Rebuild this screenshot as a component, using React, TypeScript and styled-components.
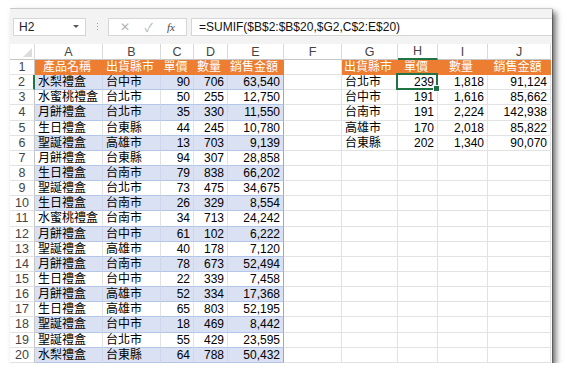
import { Fragment } from 'react';
import styled, { createGlobalStyle } from 'styled-components';

const GlobalStyle = createGlobalStyle`
  html, body { margin: 0; padding: 0; background: #fff; }
  body { font-family: "Liberation Sans", "Noto Sans CJK TC", sans-serif; }
`;

const COLS = [25, 68, 58, 33, 34, 56, 58, 56, 40, 50, 63];
const LETTERS = ['A', 'B', 'C', 'D', 'E', 'F', 'G', 'H', 'I', 'J'];

const sales: string[][] = [
  ['水梨禮盒', '台中市', '90', '706', '63,540'],
  ['水蜜桃禮盒', '台北市', '50', '255', '12,750'],
  ['月餅禮盒', '台北市', '35', '330', '11,550'],
  ['生日禮盒', '台東縣', '44', '245', '10,780'],
  ['聖誕禮盒', '高雄市', '13', '703', '9,139'],
  ['月餅禮盒', '台東縣', '94', '307', '28,858'],
  ['生日禮盒', '台南市', '79', '838', '66,202'],
  ['聖誕禮盒', '台北市', '73', '475', '34,675'],
  ['生日禮盒', '台南市', '26', '329', '8,554'],
  ['水蜜桃禮盒', '台南市', '34', '713', '24,242'],
  ['月餅禮盒', '台中市', '61', '102', '6,222'],
  ['聖誕禮盒', '高雄市', '40', '178', '7,120'],
  ['月餅禮盒', '台南市', '78', '673', '52,494'],
  ['生日禮盒', '台中市', '22', '339', '7,458'],
  ['月餅禮盒', '高雄市', '52', '334', '17,368'],
  ['生日禮盒', '高雄市', '65', '803', '52,195'],
  ['聖誕禮盒', '台中市', '18', '469', '8,442'],
  ['聖誕禮盒', '台北市', '55', '429', '23,595'],
  ['水梨禮盒', '台東縣', '64', '788', '50,432'],
];

const summary: string[][] = [
  ['台北市', '239', '1,818', '91,124'],
  ['台中市', '191', '1,616', '85,662'],
  ['台南市', '191', '2,224', '142,938'],
  ['高雄市', '170', '2,018', '85,822'],
  ['台東縣', '202', '1,340', '90,070'],
];

const salesHead = ['產品名稱', '出貨縣市', '單價', '數量', '銷售金額'];
const summaryHead = ['出貨縣市', '單價', '數量', '銷售金額'];

type Kind = 'head' | 'band' | 'light' | 'plain';
type Align = 'left' | 'right' | 'center';

const Window = styled.div`
  margin: 8px 0 0 10px;
  width: 542px;
  background: #fff;
  border-top: 1px solid #c8c8c8;
  box-shadow: 4px 4px 6px rgba(0, 0, 0, 0.55), 1px 1px 1px rgba(0, 0, 0, 0.3);
`;

const FormulaBar = styled.div`
  display: flex;
  align-items: center;
  height: 35px;
  padding-left: 3px;
  background: #f3f3f3;
`;

const Box = styled.div`
  box-sizing: border-box;
  height: 18px;
  background: #fff;
  border: 1px solid #d6d6d6;
  display: flex;
  align-items: center;
  font-size: 12px;
  color: #222;
`;

const NameBox = styled(Box)`
  width: 73px;
  padding-left: 5px;
  justify-content: space-between;
`;

const Caret = styled.span`
  width: 0;
  height: 0;
  border-left: 3px solid transparent;
  border-right: 3px solid transparent;
  border-top: 3px solid #555;
  margin-right: 6px;
`;

const Grip = styled.div`
  width: 22px;
  display: flex;
  flex-direction: column;
  align-items: center;
  gap: 2px;
  & > i {
    width: 1px;
    height: 1px;
    background: #999;
  }
`;

const Icons = styled(Box)`
  width: 79px;
  justify-content: space-around;
  padding: 0 4px;
  color: #b4b4b4;
  margin-right: 4px;
`;

const Fx = styled.span`
  font-family: "Liberation Serif", serif;
  font-style: italic;
  font-size: 11px;
  color: #444;
`;

const FormulaInput = styled(Box)`
  flex: 1;
  padding-left: 7px;
  color: #111;
  border-right: none;
`;

const Sheet = styled.div`
  display: grid;
  grid-template-columns: ${COLS.map((c) => `${c}px`).join(' ')};
  grid-template-rows: 16px repeat(20, 15.15px);
  font-size: 12px;
  color: #000;
`;

const Corner = styled.div`
  background: #fff;
  border-right: 1px solid #dadada;
  border-bottom: 1px solid #c6c6c6;
  position: relative;
  overflow: hidden;
  &::after {
    content: '';
    position: absolute;
    right: 2px;
    bottom: 2px;
    border-left: 9px solid transparent;
    border-bottom: 9px solid #dcdcdc;
  }
`;

const ColHead = styled.div<{ $sel?: boolean }>`
  box-sizing: border-box;
  background: #fff;
  color: #444;
  font-size: 12.5px;
  display: flex;
  align-items: center;
  justify-content: center;
  border-right: 1px solid #dadada;
  border-bottom: ${(p) => (p.$sel ? '2px solid #217346' : '1px solid #c6c6c6')};
`;

const RowHead = styled.div<{ $sel?: boolean }>`
  box-sizing: border-box;
  background: #fff;
  color: #444;
  font-size: 12.5px;
  display: flex;
  align-items: center;
  justify-content: center;
  border-bottom: 1px solid #e2e2e2;
  border-right: ${(p) => (p.$sel ? '2px solid #217346' : '1px solid #c6c6c6')};
`;

const fills: Record<Kind, string> = {
  head: '#ed7d31',
  band: '#d9e1f2',
  light: '#fff',
  plain: '#fff',
};

const Cell = styled.div<{ $kind: Kind; $align: Align; $edge?: boolean }>`
  position: relative;
  box-sizing: border-box;
  background: ${(p) => fills[p.$kind]};
  color: ${(p) => (p.$kind === 'head' ? '#fff' : '#000')};
  display: flex;
  align-items: center;
  justify-content: ${(p) =>
    p.$align === 'left' ? 'flex-start' : p.$align === 'right' ? 'flex-end' : 'center'};
  padding: ${(p) => (p.$align === 'left' ? '0 0 0 3px' : '0 3px 0 0')};
  white-space: nowrap;
  line-height: 1;
  border-bottom: 1px solid
    ${(p) => (p.$kind === 'head' ? '#ed7d31' : p.$kind === 'plain' ? '#e2e2e2' : '#b4c6e7')};
  border-right: 1px solid
    ${(p) =>
      p.$edge
        ? '#8ea9db'
        : p.$kind === 'head'
        ? '#ed7d31'
        : p.$kind === 'band'
        ? '#cdd6ea'
        : '#e2e2e2'};
`;

const Selection = styled.div`
  position: absolute;
  inset: -2px -1px -1px -2px;
  border: 2px solid #217346;
  z-index: 2;
  pointer-events: none;
`;

const Handle = styled.div`
  position: absolute;
  right: -4px;
  bottom: -4px;
  width: 5px;
  height: 5px;
  background: #217346;
  border: 1px solid #fff;
`;

function cellFor(row: number, col: number): { kind: Kind; align: Align; text: string; edge?: boolean } {
  const align: Align = col === 0 || col === 1 || col === 6 ? 'left' : 'right';
  if (row === 1) {
    if (col <= 4) return { kind: 'head', align: 'center', text: salesHead[col] };
    if (col >= 6) return { kind: 'head', align: 'center', text: summaryHead[col - 6] };
    return { kind: 'plain', align, text: '' };
  }
  if (col <= 4) {
    return { kind: row % 2 === 0 ? 'band' : 'light', align, text: sales[row - 2][col], edge: col === 4 };
  }
  if (col >= 6 && row <= 6) {
    return { kind: 'plain', align, text: summary[row - 2][col - 6] };
  }
  return { kind: 'plain', align, text: '' };
}

export default function App() {
  const rows = Array.from({ length: 20 }, (_, i) => i + 1);
  return (
    <>
      <GlobalStyle />
      <Window>
        <FormulaBar>
          <NameBox>
            H2
            <Caret />
          </NameBox>
          <Grip>
            <i />
            <i />
            <i />
          </Grip>
          <Icons>
            <span>✕</span>
            <span>✓</span>
            <Fx>fx</Fx>
          </Icons>
          <FormulaInput>=SUMIF($B$2:$B$20,$G2,C$2:E$20)</FormulaInput>
        </FormulaBar>
        <Sheet>
          <Corner />
          {LETTERS.map((l) => (
            <ColHead key={l} $sel={l === 'H'}>
              {l}
            </ColHead>
          ))}
          {rows.map((r) => (
            <Fragment key={r}>
              <RowHead $sel={r === 2}>{r}</RowHead>
              {LETTERS.map((l, c) => {
                const info = cellFor(r, c);
                return (
                  <Cell key={l} $kind={info.kind} $align={info.align} $edge={info.edge}>
                    {info.text}
                    {r === 2 && l === 'H' && (
                      <Selection>
                        <Handle />
                      </Selection>
                    )}
                  </Cell>
                );
              })}
            </Fragment>
          ))}
        </Sheet>
      </Window>
    </>
  );
}
